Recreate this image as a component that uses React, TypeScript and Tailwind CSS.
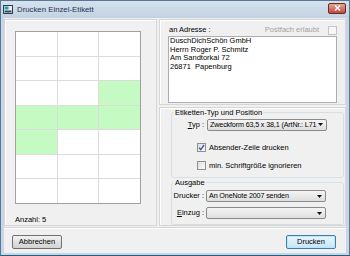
import React from "react";

const greenCells = [8, 9, 10, 11, 12];

function Check({ checked, disabled }: { checked?: boolean; disabled?: boolean }) {
  return (
    <span
      className={`w-[9px] h-[9px] border flex items-center justify-center shrink-0 ${
        disabled ? "border-[#c4c4c4] bg-[#f6f6f6]" : "border-[#8e8f8f] bg-gradient-to-br from-[#dedede] to-[#fbfbfb]"
      }`}
    >
      {checked && (
        <svg width="7" height="7" viewBox="0 0 7 7">
          <path d="M1 3.6 L2.8 5.6 L6 1" fill="none" stroke="#3d5aa8" strokeWidth="1.4" />
        </svg>
      )}
    </span>
  );
}

function Combo({ text }: { text?: string }) {
  return (
    <div className="w-[120px] h-[12px] border border-[#8a8a8a] rounded-[2px] bg-gradient-to-b from-[#f5f5f5] to-[#dedede] flex items-center pl-[2px] pr-[3px]">
      <span className="flex-1 whitespace-nowrap overflow-hidden leading-[10px] text-[7.2px] tracking-[-0.15px]">{text}</span>
      <svg width="5" height="3" viewBox="0 0 5 3" className="shrink-0 ml-[1px]">
        <path d="M0 0h5L2.5 3z" fill="#111" />
      </svg>
    </div>
  );
}

function Button({ label, primary }: { label: string; primary?: boolean }) {
  return (
    <div
      className={`w-[50px] h-[14px] rounded-[2px] border flex items-center justify-center ${
        primary
          ? "border-[#3c7fb1] bg-gradient-to-b from-[#eaf6fd] to-[#c4e5f6] shadow-[inset_0_0_0_1px_#bfe6f8]"
          : "border-[#707070] bg-gradient-to-b from-[#f2f2f2] to-[#d2d2d2]"
      }`}
    >
      {label}
    </div>
  );
}

export default function App() {
  return (
    <div className="w-[350px] h-[256px] bg-[#c6d6e7] border border-[#5a7894] border-b-[#1f5f80] flex flex-col font-['Liberation_Sans',Arial,sans-serif] text-[7.5px] text-black overflow-hidden">
      {/* title bar */}
      <div className="h-[17px] flex items-center pl-[2px] pr-[3px] bg-gradient-to-b from-[#d5e1ee] to-[#c3d2e2]">
        <svg width="10" height="9" viewBox="0 0 10 9" className="mr-[4px]">
          <rect x="0.5" y="0.5" width="9" height="8" fill="#e8eef4" stroke="#2c3e50" />
          <rect x="1.5" y="1.5" width="4" height="3" fill="#2a9db0" />
          <rect x="1.5" y="5.5" width="7" height="2" fill="#34495e" />
        </svg>
        <span className="text-[#1e3350] text-[7.8px]">Drucken Einzel-Etikett</span>
        <div className="ml-auto w-[18px] h-[11px] mb-[3px] rounded-[2px] border border-[#6b2a22] bg-gradient-to-b from-[#e8a595] to-[#c0473a] flex items-center justify-center">
          <svg width="7" height="6" viewBox="0 0 7 6">
            <path d="M1 0.5 L6 5.5 M6 0.5 L1 5.5" stroke="#fff" strokeWidth="1.4" />
          </svg>
        </div>
      </div>

      {/* client */}
      <div className="flex-1 mx-[3px] mb-[2px] bg-[#f0f0f0] flex flex-col">
        <div className="flex gap-[2px] pt-[1px] h-[208px]">
          {/* left panel */}
          <div className="w-[153px] border border-[#d6d6d6] shadow-[inset_1px_1px_0_#fff] pl-[10px] pt-[11px] flex flex-col">
            <div className="w-[126px] h-[173px] border border-[#a0a0a0] bg-[#dcdcdc] grid grid-cols-3 grid-rows-7 gap-px">
              {Array.from({ length: 21 }).map((_, i) => (
                <div key={i} className={greenCells.includes(i) ? "bg-[#c6fac3]" : "bg-white"} />
              ))}
            </div>
            <div className="mt-[10px]">Anzahl: 5</div>
          </div>

          {/* right column */}
          <div className="flex-1 flex flex-col gap-[2px]">
            <div className="h-[88px] border border-[#d6d6d6] shadow-[inset_1px_1px_0_#fff] pl-[8px] pr-[8px] pt-[5px] flex flex-col">
              <div className="h-[10px] flex items-center">
                <span className="ml-[1px]">an Adresse :</span>
                <span className="ml-auto mr-[9px] text-[#a3a3a3]">Postfach erlaubt</span>
                <Check disabled />
              </div>
              <div className="mt-[1px] h-[67px] border border-[#abadb3] bg-white pl-[1px] leading-[8.7px]">
                <div>DuschDichSchön GmbH</div>
                <div>Herrn Roger P. Schmitz</div>
                <div>Am Sandtorkai 72</div>
                <div>26871&nbsp; Papenburg</div>
              </div>
            </div>

            <div className="flex-1 border border-[#d6d6d6] shadow-[inset_1px_1px_0_#fff] pl-[11px] pr-[1px] flex flex-col">
              <fieldset className="border border-[#d5dfe5] rounded-[3px] pt-[2px] pb-[6px] px-0">
                <legend className="ml-[2px] px-[1px] leading-[9px]">Etiketten-Typ und Position</legend>
                <div className="flex items-center gap-[3px]">
                  <span className="w-[32px] text-right">
                    <span className="underline">T</span>yp :
                  </span>
                  <Combo text="Zweckform 63,5 x 38,1 (ArtNr.: L71" />
                </div>
                <div className="mt-[11px] pl-[25px] flex items-center gap-[3px]">
                  <Check checked />
                  <span>Absender-Zeile drucken</span>
                </div>
                <div className="mt-[7px] pl-[25px] flex items-center gap-[3px]">
                  <Check />
                  <span>min. Schriftgröße ignorieren</span>
                </div>
              </fieldset>
              <fieldset className="border border-[#d5dfe5] rounded-[3px] pt-[3px] pb-[5px] px-0">
                <legend className="ml-[2px] px-[1px] leading-[9px]">Ausgabe</legend>
                <div className="flex items-center gap-[2px]">
                  <span className="w-[32px] text-right">Drucker :</span>
                  <Combo text="An OneNote 2007 senden" />
                </div>
                <div className="mt-[5px] flex items-center gap-[2px]">
                  <span className="w-[32px] text-right">
                    <span className="underline">E</span>inzug :
                  </span>
                  <Combo />
                </div>
              </fieldset>
            </div>
          </div>
        </div>

        {/* separator */}
        <div className="mt-[1px] h-[2px] border-t border-[#d5d5d5] border-b border-b-white" />

        {/* buttons */}
        <div className="mt-[6px] flex justify-between pl-[8px] pr-[10px]">
          <Button label="Abbrechen" />
          <Button label="Drucken" primary />
        </div>
      </div>
    </div>
  );
}
